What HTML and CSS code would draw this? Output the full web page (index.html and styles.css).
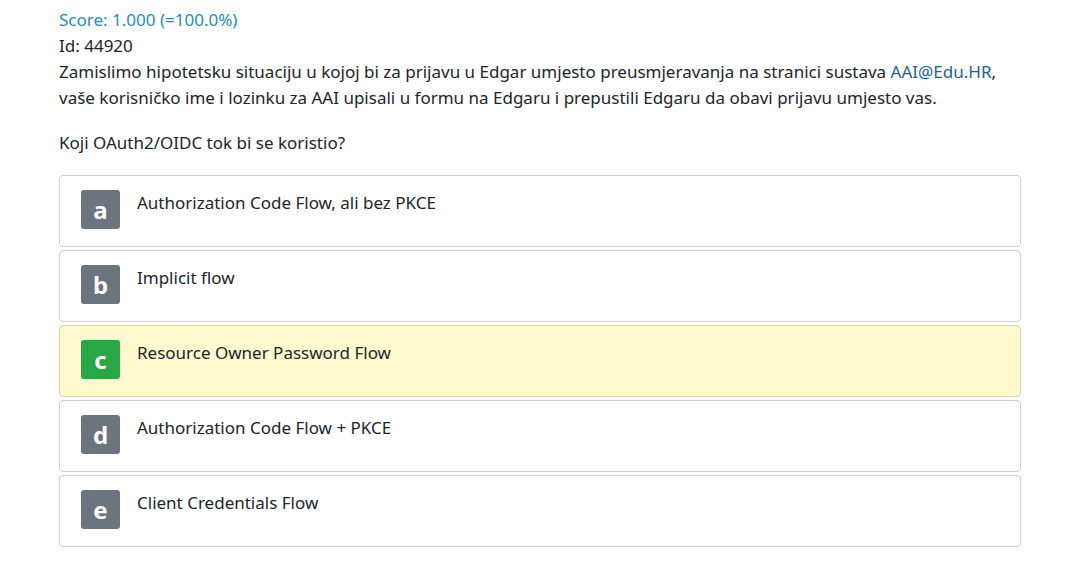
FILE: index.html
```html
<!DOCTYPE html>
<html lang="hr">
<head>
<meta charset="utf-8">
<link rel="stylesheet" href="styles.css">
</head>
<body>
<div class="page">
  <div class="score">Score: 1.000 (=100.0%)</div>
  <div class="id">Id: 44920</div>
  <p class="question">Zamislimo hipotetsku situaciju u kojoj bi za prijavu u Edgar umjesto preusmjeravanja na stranici sustava <a class="link" href="#">AAI@Edu.HR</a>, vaše korisničko ime i lozinku za AAI upisali u formu na Edgaru i prepustili Edgaru da obavi prijavu umjesto vas.</p>
  <p class="ask">Koji OAuth2/OIDC tok bi se koristio?</p>
  <div class="answers">
    <div class="answer"><span class="badge">a</span><span class="text">Authorization Code Flow, ali bez PKCE</span></div>
    <div class="answer"><span class="badge">b</span><span class="text">Implicit flow</span></div>
    <div class="answer selected"><span class="badge correct">c</span><span class="text">Resource Owner Password Flow</span></div>
    <div class="answer"><span class="badge">d</span><span class="text">Authorization Code Flow + PKCE</span></div>
    <div class="answer"><span class="badge">e</span><span class="text">Client Credentials Flow</span></div>
  </div>
</div>
</body>
</html>
```
FILE: styles.css
```css
html, body {
  margin: 0;
  padding: 0;
  background: #ffffff;
}
body {
  font-family: "Noto Sans", "Open Sans", sans-serif;
  font-size: 17px;
  line-height: 26px;
  color: #212529;
}
.page {
  padding: 7px 59px 0 59px;
  width: 962px;
}
.score {
  color: #1a8fc0;
}
.question {
  margin: 0;
}
.link {
  color: #1c5f9c;
  text-decoration: none;
}
.ask {
  margin: 19px 0 0 0;
}
.answers {
  margin-top: 19px;
  display: flex;
  flex-direction: column;
  gap: 3px;
}
.answer {
  box-sizing: border-box;
  height: 72px;
  border: 1px solid #cfcfcf;
  border-radius: 4px;
  background: #ffffff;
  display: flex;
  align-items: flex-start;
  padding: 14px 21px;
  gap: 17px;
}
.answer.selected {
  background: #fff9cf;
  border-color: #d9d4a8;
}
.badge {
  width: 39px;
  height: 39px;
  border-radius: 3px;
  background: #6c757d;
  color: #ffffff;
  font-weight: 700;
  font-size: 24px;
  display: flex;
  align-items: center;
  justify-content: center;
  line-height: 1;
  flex: none;
}
.badge.correct {
  background: #28a745;
}
.text {
  line-height: 26px;
}
```
